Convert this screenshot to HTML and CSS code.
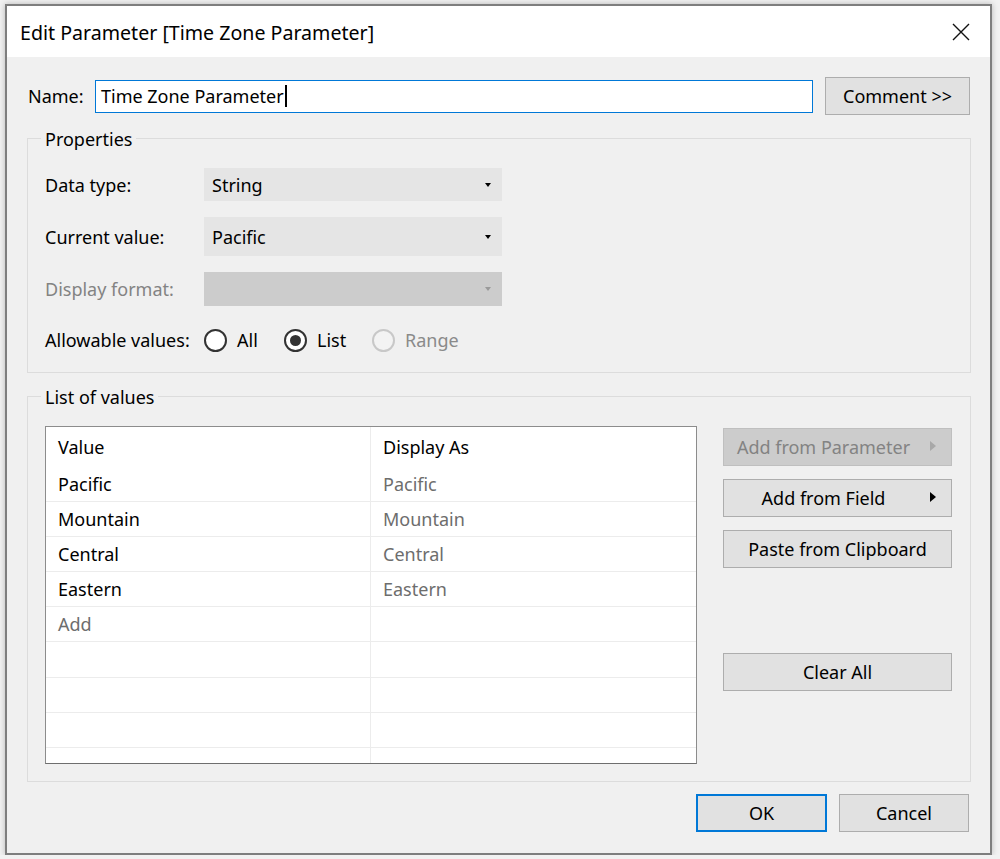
FILE: index.html
```html
<!DOCTYPE html>
<html lang="en">
<head>
  <meta charset="UTF-8">
  <title>Edit Parameter</title>
  <link rel="stylesheet" href="styles.css">
</head>
<body>
  <div class="dialog">
    <div class="title-bar">
      <span class="title">Edit Parameter [Time Zone Parameter]</span>
      <svg class="close" width="18" height="18" viewBox="0 0 18 18">
        <path d="M1 1 L17 17 M17 1 L1 17" stroke="#111" stroke-width="1.4" fill="none"/>
      </svg>
    </div>

    <div class="content">
      <div class="name-row">
        <span class="name-label">Name:</span>
        <div class="name-input">Time Zone Parameter<span class="caret"></span></div>
        <button class="btn comment">Comment &gt;&gt;</button>
      </div>

      <!-- properties -->
      <div class="group props">
        <span class="group-title">Properties</span>
        <div class="prop-grid">
          <span class="prop-label">Data type:</span>
          <div class="combo">String<span class="combo-arrow"></span></div>

          <span class="prop-label">Current value:</span>
          <div class="combo">Pacific<span class="combo-arrow"></span></div>

          <span class="prop-label disabled">Display format:</span>
          <div class="combo disabled"><span class="combo-arrow"></span></div>

          <span class="prop-label">Allowable values:</span>
          <div class="radios">
            <span class="radio-option opt-all"><span class="radio"></span>All</span>
            <span class="radio-option opt-list"><span class="radio checked"></span>List</span>
            <span class="radio-option disabled"><span class="radio"></span>Range</span>
          </div>
        </div>
      </div>

      <!-- list of values -->
      <div class="group values">
        <span class="group-title">List of values</span>
        <div class="values-body">
          <div class="value-table">
            <table>
              <thead>
                <tr><th>Value</th><th>Display As</th></tr>
              </thead>
              <tbody>
                <tr><td>Pacific</td><td class="alias">Pacific</td></tr>
                <tr><td>Mountain</td><td class="alias">Mountain</td></tr>
                <tr><td>Central</td><td class="alias">Central</td></tr>
                <tr><td>Eastern</td><td class="alias">Eastern</td></tr>
                <tr><td class="alias">Add</td><td></td></tr>
                <tr><td></td><td></td></tr>
                <tr><td></td><td></td></tr>
                <tr><td></td><td></td></tr>
                <tr><td></td><td></td></tr>
              </tbody>
            </table>
          </div>
          <div class="value-actions">
            <button class="btn action has-menu disabled">Add from Parameter<span class="sub-arrow"></span></button>
            <button class="btn action has-menu">Add from Field<span class="sub-arrow"></span></button>
            <button class="btn action">Paste from Clipboard</button>
            <button class="btn action clear">Clear All</button>
          </div>
        </div>
      </div>

      <div class="footer">
        <button class="btn footer-btn ok">OK</button>
        <button class="btn footer-btn cancel">Cancel</button>
      </div>
    </div>
  </div>
</body>
</html>
```

FILE: styles.css
```css
body {
  margin: 0;
  background: #f2f2f2;
  font-family: "Noto Sans", "Open Sans", sans-serif;
  font-size: 18px;
  color: #000;
}
.dialog {
  margin: 4px 0 0 5px;
  width: 983px;
  height: 847px;
  border: 2px solid #7e7e7e;
  background: #f0f0f0;
  box-shadow: 0 0 6px rgba(0,0,0,0.25);
}
.title-bar {
  height: 51px;
  background: #fff;
  display: flex;
  align-items: center;
  justify-content: space-between;
  padding: 2px 20px 0 13px;
  box-sizing: border-box;
}
.title {
  font-size: 19.6px;
}
.close {
  display: block;
  margin-top: -2px;
}
.content {
  padding: 20px 19px 0 20px;
}
.btn {
  font: inherit;
  color: #000;
  background: #e1e1e1;
  border: 1px solid #adadad;
  box-sizing: border-box;
  padding: 0;
  cursor: pointer;
}

/* name row */
.name-row {
  display: flex;
  align-items: center;
  height: 38px;
  margin: 0 1px;
}
.name-label {
  width: 67px;
}
.name-input {
  width: 718px;
  height: 33px;
  box-sizing: border-box;
  border: 1px solid #0078d7;
  background: #fff;
  padding-left: 5px;
  display: flex;
  align-items: center;
}
.caret {
  display: inline-block;
  width: 2px;
  height: 22px;
  background: #000;
  margin-left: 1px;
}
.comment {
  width: 145px;
  height: 38px;
  margin-left: 12px;
}

/* group boxes */
.group {
  position: relative;
  border: 1px solid #dcdcdc;
  box-sizing: border-box;
  margin-top: 23px;
  padding: 29px 17px 0 17px;
}
.group-title {
  position: absolute;
  top: -13px;
  left: 13px;
  padding: 0 4px;
  background: #f0f0f0;
  line-height: 26px;
}
.props {
  height: 235px;
}
.values {
  height: 386px;
}

.prop-grid {
  display: grid;
  grid-template-columns: 159px 298px;
  grid-template-rows: 33px 39px 34px 36px;
  row-gap: 16px;
  align-items: center;
}
.prop-label.disabled {
  color: #838383;
}
.combo {
  height: 100%;
  background: #e5e5e5;
  display: flex;
  align-items: center;
  justify-content: space-between;
  padding: 0 11px 0 8px;
}
.combo.disabled {
  background: #cccccc;
  justify-content: flex-end;
}
.combo-arrow {
  width: 0;
  height: 0;
  border-left: 3px solid transparent;
  border-right: 3px solid transparent;
  border-top: 4px solid #000;
}
.combo.disabled .combo-arrow {
  border-top-color: #9a9a9a;
}

.radios {
  display: flex;
  align-items: center;
}
.radio-option {
  display: flex;
  align-items: center;
  gap: 10px;
}
.opt-all { width: 80px; }
.opt-list { width: 88px; }
.radio-option.disabled {
  color: #8a8a8a;
}
.radio {
  width: 23px;
  height: 23px;
  box-sizing: border-box;
  border: 2px solid #333;
  border-radius: 50%;
  background: #fff;
  display: flex;
  align-items: center;
  justify-content: center;
}
.radio.checked::after {
  content: "";
  width: 11px;
  height: 11px;
  border-radius: 50%;
  background: #333;
}
.radio-option.disabled .radio {
  border-color: #c8c8c8;
  background: #f3f3f3;
}

/* list of values */
.values-body {
  display: flex;
  gap: 26px;
}
.value-table {
  width: 652px;
  height: 338px;
  box-sizing: border-box;
  border: 1px solid #8c8c8c;
  border-bottom-color: #6e6e6e;
  background: #fff;
  overflow: hidden;
}
.value-table table {
  width: 100%;
  border-collapse: collapse;
  table-layout: fixed;
}
.value-table th,
.value-table td {
  text-align: left;
  font-weight: normal;
  padding: 0 0 0 12px;
  white-space: nowrap;
}
.value-table th:first-child,
.value-table td:first-child {
  width: 312px;
  border-right: 1px solid #ececec;
}
.value-table th {
  height: 39.5px;
}
.value-table td {
  height: 34.2px;
  border-bottom: 1px solid #ececec;
}
.value-table .alias {
  color: #6d6d6d;
}

.value-actions {
  display: flex;
  flex-direction: column;
  gap: 13px;
  padding-top: 2px;
}
.action {
  position: relative;
  width: 229px;
  height: 38px;
}
.action.has-menu {
  padding-right: 28px;
}
.action.disabled {
  background: #cccccc;
  border-color: #bfbfbf;
  color: #838383;
}
.sub-arrow {
  position: absolute;
  right: 15px;
  top: 12px;
  width: 0;
  height: 0;
  border-top: 5px solid transparent;
  border-bottom: 5px solid transparent;
  border-left: 6px solid #000;
}
.action.disabled .sub-arrow {
  border-left-color: #a8a8a8;
}
.clear {
  margin-top: 72px;
}

.footer {
  display: flex;
  justify-content: flex-end;
  gap: 12px;
  margin-top: 12px;
  padding-right: 2px;
}
.footer-btn {
  width: 131px;
  height: 38px;
}
.footer-btn.cancel {
  width: 130px;
}
.footer-btn.ok {
  border: 2px solid #0078d7;
}
```
